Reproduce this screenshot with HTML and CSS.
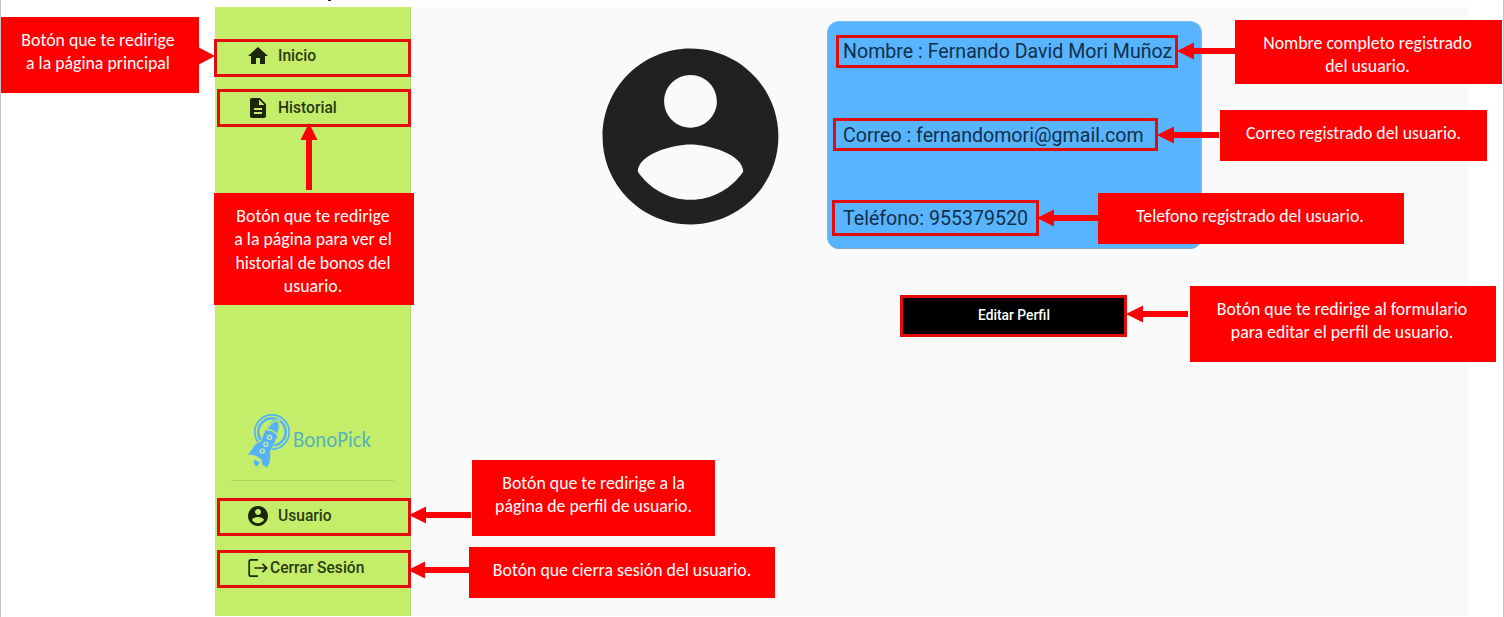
FILE: index.html
```html
<!DOCTYPE html>
<html lang="es">
<head>
<meta charset="utf-8">
<title>BonoPick - Perfil</title>
<link rel="stylesheet" href="styles.css">
</head>
<body>
<div class="page">
  <div class="app">
    <aside class="sidebar">
      <nav class="menu">
        <a class="item"><svg class="icon" viewBox="0 0 24 24"><path d="M10 20v-6h4v6h5v-8h3L12 3 2 12h3v8z"/></svg><span>Inicio</span></a>
        <a class="item"><svg class="icon" viewBox="0 0 24 24"><path d="M14 2H6c-1.100 0-1.990.9-1.990 2L4 20c0 1.100.89 2 1.990 2H18c1.100 0 2-.9 2-2V8l-6-6zm2 16H8v-2h8v2zm0-4H8v-2h8v2zm-3-5V3.500L18.500 9H13z"/></svg><span>Historial</span></a>
      </nav>
      <div class="brand">
        <svg class="logo" viewBox="0 0 126 58">
          <g fill="none" stroke="#55b1fc">
            <circle cx="25" cy="21" r="17.200" stroke-width="1.700"/>
            <circle cx="25" cy="21" r="13.700" stroke-width="2.600"/>
          </g>
          <path d="M31.700 7 Q23 8.500 18.500 18.500 L13.300 30.500 Q7.500 32 5.500 37 L0 44.700 Q5 43 10 46 Q15 47.500 15 54 L20.500 57 Q25 49 23.300 41 L30.700 25.500 Q35 13 31.700 7Z" fill="#55b1fc" stroke="#c4ee69" stroke-width=".8"/>
          <path d="M19.500 18.500 Q26 18.500 30.500 24 Q33.800 14 31 9.300 Q24 10.500 19.500 18.500Z" fill="none" stroke="#c4ee69" stroke-width="1.300"/>
          <g fill="#55b1fc" stroke="#d3ef95" stroke-width="1.200"><circle cx="22.500" cy="26.300" r="2"/><circle cx="18.800" cy="33.300" r="2"/><circle cx="15.300" cy="40" r="2"/></g>
          <path d="M7.500 48.800 L13 51 Q12 54.500 9 55.500 Q5.500 52 7.500 48.800Z" fill="#55b1fc"/>
          <text x="46" y="35.500" textLength="78" lengthAdjust="spacingAndGlyphs" class="logo-text">BonoPick</text>
        </svg>
      </div>
      <nav class="menu account">
        <a class="item"><svg class="icon" viewBox="0 0 24 24"><path d="M12 2C6.480 2 2 6.480 2 12s4.480 10 10 10 10-4.480 10-10S17.520 2 12 2zm0 3c1.660 0 3 1.340 3 3s-1.340 3-3 3-3-1.340-3-3 1.340-3 3-3zm0 14.200c-2.500 0-4.710-1.280-6-3.220.03-1.990 4-3.080 6-3.080 1.990 0 5.970 1.090 6 3.080-1.290 1.940-3.500 3.220-6 3.220z"/></svg><span>Usuario</span></a>
        <a class="item logout"><svg class="icon" viewBox="0 0 24 24"><path class="line" d="M12 3.800H5Q3.200 3.800 3.200 5.500V18.500Q3.200 20.200 5 20.200H12M8.500 12H20.500M16.500 7.800L20.700 12L16.500 16.200"/></svg><span>Cerrar Sesión</span></a>
      </nav>
    </aside>
    <main class="content">
      <svg class="avatar" viewBox="0 0 24 24"><path d="M12 2C6.480 2 2 6.480 2 12s4.480 10 10 10 10-4.480 10-10S17.520 2 12 2zm0 3c1.660 0 3 1.340 3 3s-1.340 3-3 3-3-1.340-3-3 1.340-3 3-3zm0 14.200c-2.500 0-4.710-1.280-6-3.220.03-1.990 4-3.080 6-3.080 1.990 0 5.970 1.090 6 3.080-1.290 1.940-3.500 3.220-6 3.220z"/></svg>
      <section class="profile">
        <div class="card">
          <p>Nombre : Fernando David Mori Muñoz</p>
          <p>Correo : fernandomori@gmail.com</p>
          <p>Teléfono: 955379520</p>
        </div>
        <button class="edit">Editar Perfil</button>
      </section>
    </main>
  </div>

  <svg class="marks" viewBox="0 0 1504 617">
    <rect x="328" y="0" width="3" height="1" fill="#222"/>
    <g class="boxes">
      <rect x="215.500" y="40.500" width="194" height="35"/>
      <rect x="218.500" y="90.500" width="191" height="35"/>
      <rect x="218.500" y="499.500" width="191" height="35"/>
      <rect x="218.500" y="551.500" width="191" height="35"/>
      <rect x="837.500" y="36.500" width="339" height="30"/>
      <rect x="834.500" y="119.500" width="322" height="30"/>
      <rect x="833.500" y="201.500" width="204" height="33"/>
      <rect x="901.500" y="296.500" width="224" height="39"/>
    </g>
    <g class="arrows">
      <path d="M199 47.500L215 56L199 64.500Z"/>
      <path d="M309 123L317.500 140H312V190H306V140H300.500Z"/>
      <path d="M1177 51L1194 42.500V48H1236V54H1194V59.500Z"/>
      <path d="M1157 135L1174 126.500V132H1219V138H1174V143.500Z"/>
      <path d="M1037 218L1054 209.500V215H1099V221H1054V226.500Z"/>
      <path d="M1126 314L1143 305.500V311H1188V317H1143V322.500Z"/>
      <path d="M409 515L426 506.500V512H471V518H426V523.500Z"/>
      <path d="M408 570L425 561.500V567H470V573H425V578.500Z"/>
    </g>
  </svg>
  <div class="callout c-inicio">Botón que te redirige<br>a la página principal</div>
  <div class="callout c-historial">Botón que te redirige<br>a la página para ver el<br>historial de bonos del<br>usuario.</div>
  <div class="callout c-nombre">Nombre completo registrado<br>del usuario.</div>
  <div class="callout c-correo">Correo registrado del usuario.</div>
  <div class="callout c-telefono">Telefono registrado del usuario.</div>
  <div class="callout c-editar">Botón que te redirige al formulario<br>para editar el perfil de usuario.</div>
  <div class="callout c-usuario">Botón que te redirige a la<br>página de perfil de usuario.</div>
  <div class="callout c-cerrar">Botón que cierra sesión del usuario.</div>
</div>
</body>
</html>
```
FILE: styles.css
```css
* { box-sizing: border-box; }
body { margin: 0; background: #fff; font-family: Roboto, sans-serif; }
.page {
  position: relative;
  width: 1504px;
  height: 617px;
  padding: 7px 35px 1px 214px;
  border-left: 1px solid #c4c4c4;
  border-right: 1px solid #c4c4c4;
  overflow: hidden;
}
.app { display: flex; width: 1253px; height: 609px; background: #fafafa; }
.sidebar {
  display: flex;
  flex-direction: column;
  width: 196px;
  padding: 23px 0 22px;
  background: #c4ee69;
  border-right: 1px solid #b5d570;
}
.item {
  display: flex;
  align-items: center;
  gap: 8px;
  height: 52px;
  padding-left: 31px;
  font-size: 15.6px;
  font-weight: 500;
  color: #2a3a14;
}
.account .item span { padding-bottom: 1px; }
.account .item:first-child span { padding-bottom: 0; }
.logout { gap: 0; }
.icon { width: 24px; height: 24px; fill: #1c260b; }
.icon .line { fill: none; stroke: #1c260b; stroke-width: 1.7; }
.brand {
  margin: auto 16px 0;
  padding: 0 0 11px 16px;
  border-bottom: 1px solid #aed45e;
}
.logo { display: block; width: 126px; height: 58px; overflow: visible; }
.logo-text { font: 21.5px Carlito, Lato, sans-serif; fill: #55b1bc; }
.account { margin-top: 9px; }
.content { display: flex; flex: 1; padding-left: 174px; }
.avatar { width: 211px; height: 211px; margin-top: 24px; fill: #212121; }
.profile { width: 375px; margin: 14px 0 0 31px; }
.card {
  display: flex;
  flex-direction: column;
  justify-content: space-between;
  height: 228px;
  padding: 15px 15px 14px;
  border: 1px solid #7bbcf3;
  border-bottom-color: #8da9c2;
  border-radius: 12px;
  background: #58b4ff;
}
.card p {
  margin: 0;
  font-size: 19.6px;
  line-height: 30px;
  white-space: nowrap;
  color: #122f47;
}
.edit {
  display: block;
  width: 227px;
  height: 42px;
  margin: 46px 0 0 73px;
  padding: 0 0 3px 1px;
  border: 0;
  background: #000;
  color: #fff;
  font: 500 13.8px Roboto, sans-serif;
}
.marks { position: absolute; left: -1px; top: 0; width: 1504px; height: 617px; }
.boxes { fill: none; stroke: #e30c0c; stroke-width: 3; }
.arrows { fill: #fa0306; }
.callout {
  position: absolute;
  padding-top: 12px;
  background: #f00;
  color: #fff;
  font: 17.8px/23.3px Carlito, Lato, sans-serif;
  text-align: center;
  white-space: nowrap;
}
.c-inicio { left: 0; top: 17px; width: 198px; height: 76px; padding-right: 4px; }
.c-historial { left: 213px; top: 193px; width: 200px; height: 112px; padding-right: 2px; }
.c-nombre { left: 1234px; top: 20px; width: 267px; height: 64px; padding-right: 2px; }
.c-correo { left: 1219px; top: 110px; width: 267px; height: 51px; }
.c-telefono { left: 1097px; top: 193px; width: 306px; height: 51px; padding-right: 2px; }
.c-editar { left: 1189px; top: 286px; width: 306px; height: 76px; padding-right: 2px; }
.c-usuario { left: 471px; top: 460px; width: 243px; height: 76px; }
.c-cerrar { left: 468px; top: 547px; width: 306px; height: 51px; }
```
